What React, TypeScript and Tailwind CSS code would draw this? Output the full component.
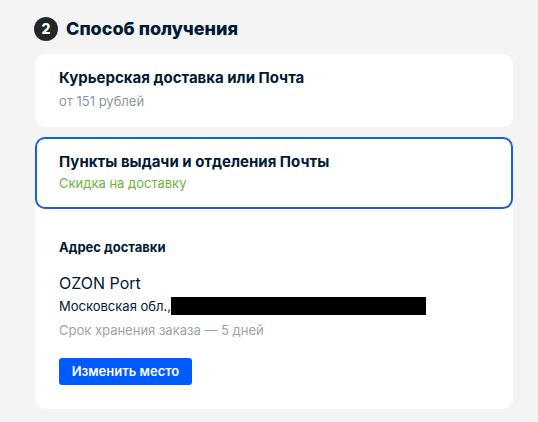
export default function App() {
  return (
    <div className="min-h-screen bg-[#f4f4f5] pl-[35px] pr-[25px] pt-[17px] pb-4 font-['Inter','Noto_Sans',sans-serif] text-[#001a34]">
      {/* Step header */}
      <div className="flex items-center gap-[8px] -ml-[1px]">
        <span className="flex h-[24px] w-[24px] items-center justify-center rounded-full bg-[#262626] text-[14px] font-extrabold leading-none text-white">
          2
        </span>
        <h2 className="text-[18px] font-extrabold leading-6">Способ получения</h2>
      </div>

      {/* Courier option */}
      <button className="mt-[13px] block w-full rounded-[10px] bg-white px-6 pt-[14px] pb-[17px] text-left">
        <div className="text-[15px] font-bold leading-5">Курьерская доставка или Почта</div>
        <div className="mt-[4px] text-[13px] leading-[18px] text-[#8d96a0]">от 151 рублей</div>
      </button>

      {/* Pickup option, selected */}
      <div className="mt-[10px] rounded-[10px] bg-white">
        <div className="rounded-[10px] border-2 border-[#1a5fd3] px-[22px] pt-[13px] pb-[15px]">
          <div className="text-[15px] font-bold leading-5">Пункты выдачи и отделения Почты</div>
          <div className="mt-[2px] text-[13px] leading-[18px] text-[#6cb33f]">Скидка на доставку</div>
        </div>

        <div className="px-6 pt-[29px] pb-[24px]">
          <div className="text-[13px] font-bold leading-[18px]">Адрес доставки</div>
          <div className="mt-[16px] text-[16px] leading-[22px]">OZON Port</div>
          <div className="mt-[3px] flex items-center text-[13px] leading-[18px]">
            <span>Московская обл.,</span>
            <span className="h-[18px] w-[255px] bg-black" />
          </div>
          <div className="mt-[6px] text-[13px] leading-[18px] text-[#9aa3ab]">Срок хранения заказа — 5 дней</div>
          <button className="mt-[19px] h-[27px] w-[133px] rounded-[3px] bg-[#005bff] text-[13px] font-semibold text-white">
            Изменить место
          </button>
        </div>
      </div>
    </div>
  );
}
